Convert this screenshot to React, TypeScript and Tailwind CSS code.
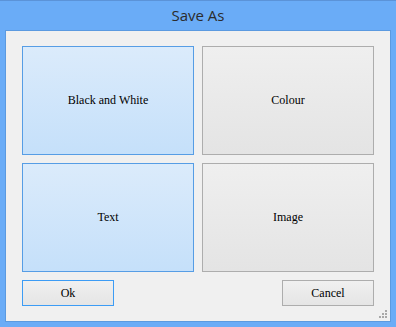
import React from 'react';

const serif = "font-['Liberation_Serif','Times_New_Roman',serif] text-[12px] leading-none text-black";

function Tile({ label, selected }: { label: string; selected?: boolean }) {
  return (
    <button
      className={
        selected
          ? `h-[109px] pb-[1px] border border-[#569de5] bg-gradient-to-b from-[#dbebfb] to-[#c5e0fa] ${serif}`
          : `h-[109px] pb-[1px] border border-[#adadad] bg-gradient-to-b from-[#efefef] to-[#e4e4e4] ${serif}`
      }
    >
      {label}
    </button>
  );
}

export default function App() {
  return (
    <div className="w-[396px] h-[327px] bg-[#6aacf7] border-t border-[#5b93d8] flex flex-col">
      {/* Title bar */}
      <div className="h-[29px] flex items-center justify-center text-[15px] text-[#2b2b2b] font-['Open_Sans','Noto_Sans',sans-serif]">
        Save As
      </div>

      {/* Client area */}
      <div className="relative mx-[5px] h-[292px] border border-[#5b9ae0] bg-[#f0f0f0] pt-[15px] px-[16px]">
        <div className="grid grid-cols-2 gap-2">
          <Tile label="Black and White" selected />
          <Tile label="Colour" />
          <Tile label="Text" selected />
          <Tile label="Image" />
        </div>

        <div className="mt-2 flex justify-between">
          <button className={`w-[92px] h-[26px] border border-[#3c9cf5] bg-gradient-to-b from-[#f0f0f0] to-[#e5e5e5] ${serif}`}>
            Ok
          </button>
          <button className={`w-[92px] h-[26px] border border-[#adadad] bg-gradient-to-b from-[#f0f0f0] to-[#e5e5e5] ${serif}`}>
            Cancel
          </button>
        </div>

        {/* Resize grip */}
        <svg className="absolute right-[2px] bottom-[2px]" width="10" height="10" viewBox="0 0 10 10">
          <rect x="7" y="1" width="2" height="2" fill="#a8a8a8" />
          <rect x="4" y="4" width="2" height="2" fill="#a8a8a8" />
          <rect x="7" y="4" width="2" height="2" fill="#a8a8a8" />
          <rect x="1" y="7" width="2" height="2" fill="#a8a8a8" />
          <rect x="4" y="7" width="2" height="2" fill="#a8a8a8" />
          <rect x="7" y="7" width="2" height="2" fill="#a8a8a8" />
        </svg>
      </div>
    </div>
  );
}
